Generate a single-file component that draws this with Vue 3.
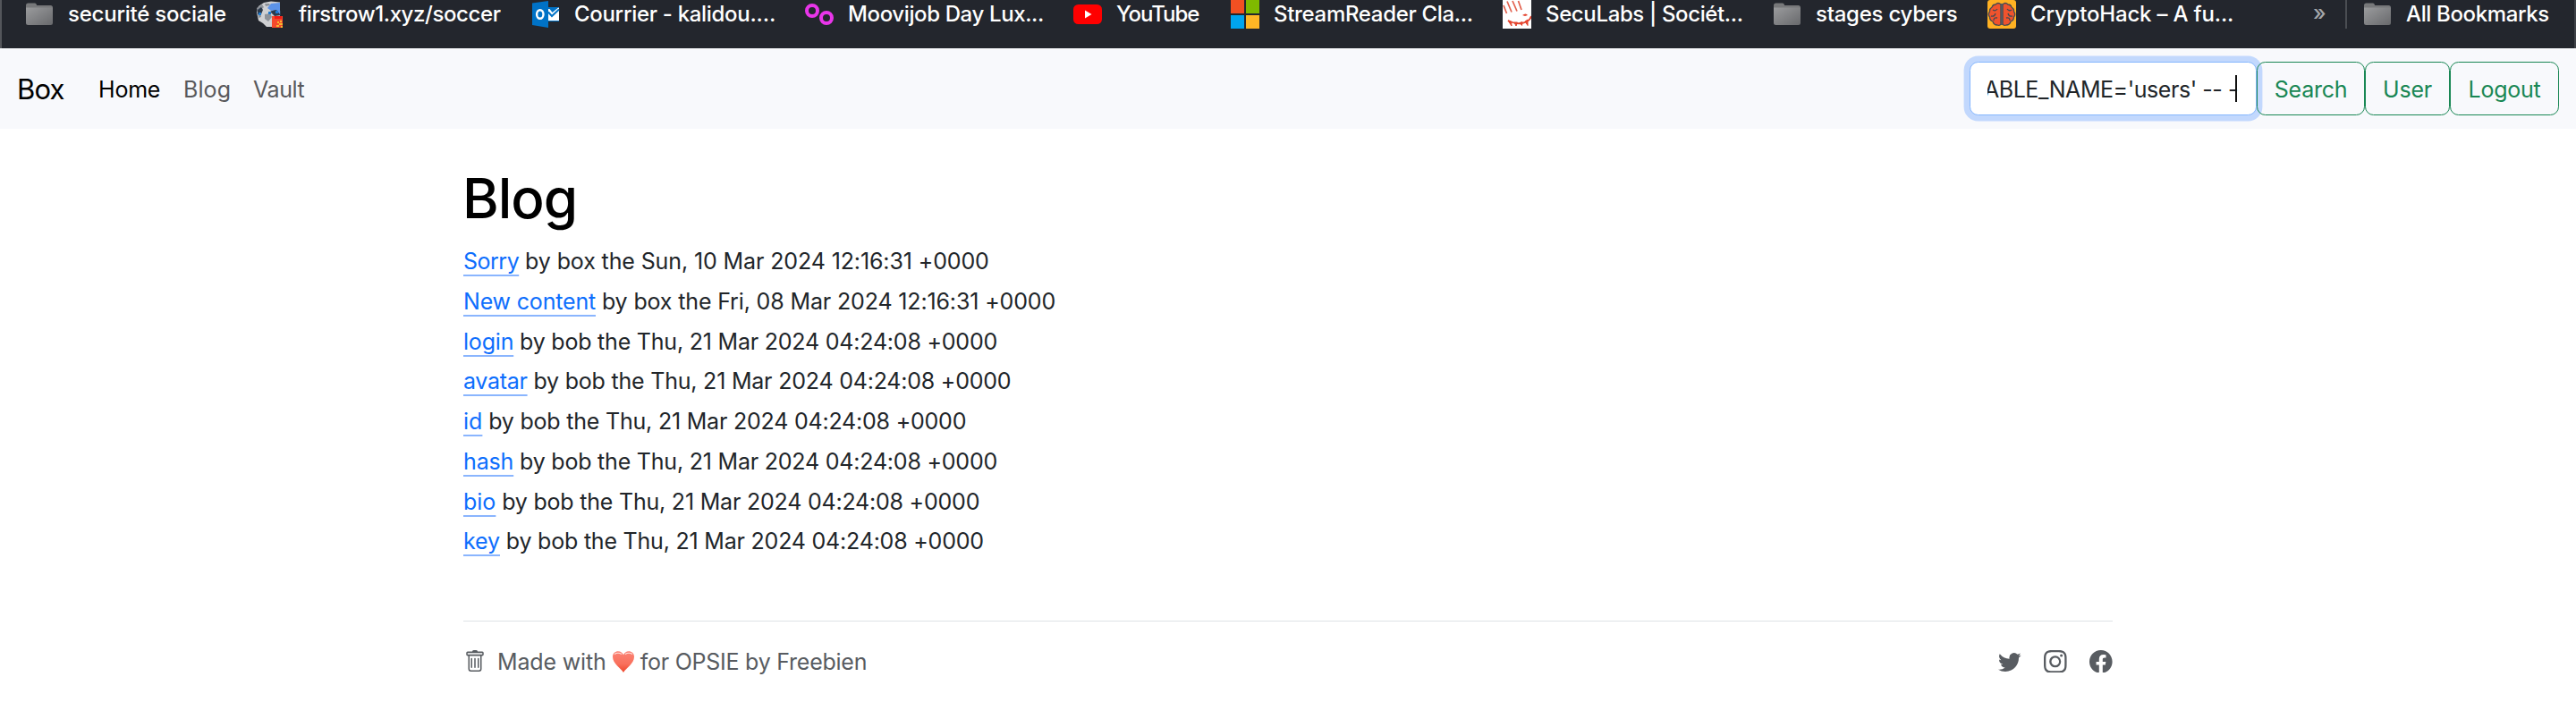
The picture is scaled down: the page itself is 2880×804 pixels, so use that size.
<script setup>
const bookmarks = [
  { icon: 'folder', label: 'securité sociale', width: 258, spacing: -0.225 },
  { icon: 'ball', label: 'firstrow1.xyz/soccer', width: 308, spacing: -0.402 },
  { icon: 'outlook', label: 'Courrier - kalidou.…', width: 306, spacing: -0.306 },
  { icon: 'moovi', label: 'Moovijob Day Lux...', width: 300, spacing: -0.376 },
  { icon: 'youtube', label: 'YouTube', width: 176, spacing: -1.05 },
  { icon: 'microsoft', label: 'StreamReader Cla...', width: 304, spacing: -0.311 },
  { icon: 'secu', label: 'SecuLabs | Sociét...', width: 302, spacing: -0.367 },
  { icon: 'folder', label: 'stages cybers', width: 240, spacing: -0.245 },
  { icon: 'brain', label: 'CryptoHack – A fu...', width: 300, spacing: -0.179 },
]

const thu = 'bob the Thu, 21 Mar 2024 04:24:08 +0000'
const posts = [
  { title: 'Sorry', meta: 'box the Sun, 10 Mar 2024 12:16:31 +0000', ls: -0.5, ms: -0.117 },
  { title: 'New content', meta: 'box the Fri, 08 Mar 2024 12:16:31 +0000', ls: -0.177, ms: -0.143 },
  { title: 'login', meta: thu, ls: -0.2, ms: -0.21 },
  { title: 'avatar', meta: thu, ls: -0.3, ms: -0.21 },
  { title: 'id', meta: thu, ls: 0, ms: -0.21 },
  { title: 'hash', meta: thu, ls: -0.15, ms: -0.21 },
  { title: 'bio', meta: thu, ls: 0, ms: -0.21 },
  { title: 'key', meta: thu, ls: -0.1, ms: -0.21 },
]
</script>

<template>
  <div class="page">
    <svg width="0" height="0" class="defs">
      <defs>
        <linearGradient id="folderFill" x1="0" y1="0" x2="1" y2="1">
          <stop offset="0" stop-color="#9a9b9d" />
          <stop offset="1" stop-color="#68696c" />
        </linearGradient>
        <linearGradient id="heartFill" x1="0" y1="0" x2="0" y2="1">
          <stop offset="0" stop-color="#fb8375" />
          <stop offset="0.6" stop-color="#f9705c" />
          <stop offset="1" stop-color="#ee4428" />
        </linearGradient>
        <symbol id="folder" viewBox="0 0 32 32">
          <path d="M1 6a2.500 2.500 0 0 1 2.500-2.500h7.500a2 2 0 0 1 1.800 1.500l.4 1H28.500A2.500 2.500 0 0 1 31 8.500V10H1z" fill="#77787a" />
          <path d="M1 8.500h29a1 1 0 0 1 1 1V25.500A2.500 2.500 0 0 1 28.500 28h-25A2.500 2.500 0 0 1 1 25.500z" fill="url(#folderFill)" />
        </symbol>
        <symbol id="ball" viewBox="0 0 32 32">
          <path d="M9 3l8-1.500 10 1v21L18 30h-6l-4-4-5-3-2-9 2-7z" fill="#cfd0d2" />
          <path d="M1 9l6-4 2 3-4 4 1 7-3 1zM10 4l5 0 1 2-5 1zM10 16l6-1 2 4-4 5-4-3z" fill="#8d9299" />
          <path d="M2 11l4-3 2 3-2 5-4 0zM16 13l6-3 6 2v5l-7 1z" fill="#2d3b4c" />
          <path d="M17 4l10-1v13l-4-5-6 1-4-3z" fill="#5c93e8" />
          <path d="M3 14h3v3H3zM14 13h3v3h-3zM22 12h3v3h-3z" fill="#1d7ad0" />
          <rect x="18" y="18" width="12" height="13" fill="#f4492d" />
          <path d="M21 18h8v3h-8z" fill="#f11a14" />
          <path d="M24 24h2v2h-2zM27 23h2v2h-2zM26 26h4v2h-4zM23 28h3v2h-3zM28 29h2v2h-2z" fill="#f8b62d" />
        </symbol>
        <symbol id="outlook" viewBox="0 0 32 32">
          <path d="M1 3.500L19 1v30L1 28z" fill="#0072c6" />
          <path d="M19 8h12v16H19z" fill="#0072c6" />
          <path d="M19 10h1.500l3 4L30 8.800h1V23H19z" fill="#fff" />
          <path d="M19 13.500l4 4.500 8-7.500" fill="none" stroke="#0072c6" stroke-width="2" />
          <ellipse cx="9.800" cy="16" rx="3.700" ry="4.800" fill="none" stroke="#fff" stroke-width="2.400" />
        </symbol>
        <symbol id="moovi" viewBox="0 0 32 32">
          <circle cx="8" cy="12" r="6" fill="none" stroke="#e935ea" stroke-width="4" />
          <circle cx="24" cy="20" r="6" fill="none" stroke="#e935ea" stroke-width="4" />
        </symbol>
        <symbol id="youtube" viewBox="0 0 32 32">
          <rect x="0" y="5" width="32" height="22" rx="5.500" fill="#f00" />
          <path d="M13 11.500L20.500 16 13 20.500z" fill="#fff" />
        </symbol>
        <symbol id="microsoft" viewBox="0 0 32 32">
          <path d="M0 0h15v15H0z" fill="#f25022" />
          <path d="M17 0h15v15H17z" fill="#7fba00" />
          <path d="M0 17h15v15H0z" fill="#00a4ef" />
          <path d="M17 17h15v15H17z" fill="#ffb625" />
        </symbol>
        <symbol id="secu" viewBox="0 0 32 32">
          <path d="M0 0h32v32H0z" fill="#fff" />
          <path d="M1 6l3.500 9M5 1.500l5 12M11 1l5 11.500M17.500 1l3.500 10" fill="none" stroke="#e2604d" stroke-width="1.700" />
          <path d="M6 23q13 6 21 1 4-2 5-6" fill="none" stroke="#e5452f" stroke-width="1.800" />
          <path d="M6 23l4 6-.5-5zM13 25l2 4 1.500-4zM19 25.500l2.500 3 .5-4zM25 24l3 4.500V22z" fill="#e5452f" stroke="#e5452f" stroke-width="1" />
          <path d="M22 17q4-3 6 0l-3 1z" fill="#e5452f" />
        </symbol>
        <symbol id="brain" viewBox="0 0 32 32">
          <rect width="32" height="32" rx="3" fill="#ffb122" />
          <g fill="#f0532d" stroke="#454a51" stroke-width="1.300" stroke-linejoin="round">
            <path d="M15 5q-3-3-6 0-3 0-4 3-3 2-2.500 5Q0 16 2.500 19q0 4 3.500 5 1 4 5 4 3 1 4-1z" />
            <path d="M17 5q3-3 6 0 3 0 4 3 3 2 2.500 5Q32 16 29.500 19q0 4-3.500 5-1 4-5 4-3 1-4-1z" />
            <path d="M6 11q3 2 5-1M4 18q4 1 5-3M7 23q0-4 4-3M27 11q-3 2-5-1M28 18q-4 1-5-3M25 23q0-4-4-3" fill="none" />
          </g>
          <path d="M14.800 4h2.400v24h-2.400z" fill="#55585d" />
        </symbol>
      </defs>
    </svg>

    <div class="bookmarks">
      <div
        v-for="b in bookmarks"
        :key="b.label"
        class="bookmark"
        :style="{ width: b.width + 'px', letterSpacing: b.spacing + 'px' }"
      >
        <svg width="32" height="32"><use :href="'#' + b.icon" /></svg>
        <span>{{ b.label }}</span>
      </div>
      <span class="more">»</span>
      <span class="divider"></span>
      <div class="bookmark all">
        <svg width="32" height="32"><use href="#folder" /></svg>
        <span>All Bookmarks</span>
      </div>
    </div>

    <nav class="navbar">
      <a class="brand">Box</a>
      <a class="link home">Home</a>
      <a class="link blog">Blog</a>
      <a class="link vault">Vault</a>
      <div class="tools">
        <div class="field">
          <div class="value"><span>TABLE_NAME='users' -- -</span></div>
          <i class="caret"></i>
        </div>
        <button class="btn search">Search</button>
        <button class="btn user">User</button>
        <button class="btn logout">Logout</button>
      </div>
    </nav>

    <main class="container">
      <h1>Blog</h1>
      <ul>
        <li v-for="p in posts" :key="p.title" :style="{ letterSpacing: p.ms + 'px' }">
          <a :style="{ letterSpacing: p.ls + 'px' }">{{ p.title }}</a> by {{ p.meta }}
        </li>
      </ul>
      <footer>
        <svg class="trash" width="24" height="25.600" viewBox="0 0 16 16" preserveAspectRatio="none" fill="currentColor">
          <path d="M5.500 5.500A.5.500 0 0 1 6 6v6a.5.500 0 0 1-1 0V6a.5.500 0 0 1 .5-.5m2.500 0a.5.500 0 0 1 .5.500v6a.5.500 0 0 1-1 0V6a.5.500 0 0 1 .5-.5m3 .5a.5.500 0 0 0-1 0v6a.5.500 0 0 0 1 0z" />
          <path d="M14.500 3a1 1 0 0 1-1 1H13v9a2 2 0 0 1-2 2H5a2 2 0 0 1-2-2V4h-.5a1 1 0 0 1-1-1V2a1 1 0 0 1 1-1H6a1 1 0 0 1 1-1h2a1 1 0 0 1 1 1h3.500a1 1 0 0 1 1 1zM4.118 4 4 4.059V13a1 1 0 0 0 1 1h6a1 1 0 0 0 1-1V4.059L11.882 4zM2.500 3h11V2h-11z" />
        </svg>
        <span class="made">Made with</span>
        <svg class="heart" width="24" height="24" viewBox="0 0 24 24">
          <path d="M12 24C9 19 0 14 0 6.500 0 2.500 3 .3 6 .3c3 0 5 1.700 6 4 1-2.300 3-4 6-4s6 2.200 6 6.200C24 14 15 19 12 24z" fill="url(#heartFill)" />
          <path d="M2 3.500q4-2.500 8 0M14 3.500q4-2.500 8 0" fill="none" stroke="#fde0dc" stroke-width="1.200" />
        </svg>
        <span class="for">for OPSIE by Freebien</span>
        <div class="social">
          <svg viewBox="0 0 16 16" fill="currentColor">
            <path d="M5.026 15c6.038 0 9.341-5.003 9.341-9.334q.002-.211-.006-.422A6.700 6.700 0 0 0 16 3.542a6.700 6.700 0 0 1-1.889.518 3.300 3.300 0 0 0 1.447-1.817 6.500 6.500 0 0 1-2.087.793A3.286 3.286 0 0 0 7.875 6.030a9.320 9.320 0 0 1-6.767-3.429 3.290 3.290 0 0 0 1.018 4.382A3.300 3.300 0 0 1 .64 6.575v.045a3.290 3.290 0 0 0 2.632 3.218 3.200 3.200 0 0 1-.865.115 3 3 0 0 1-.614-.057 3.280 3.280 0 0 0 3.067 2.277A6.600 6.600 0 0 1 .78 13.580a6 6 0 0 1-.78-.045A9.340 9.340 0 0 0 5.026 15" />
          </svg>
          <svg viewBox="0 0 16 16" fill="currentColor">
            <path d="M8 0C5.829 0 5.556.010 4.703.048 3.850.088 3.269.222 2.760.420a3.900 3.900 0 0 0-1.417.923A3.900 3.900 0 0 0 .420 2.760C.222 3.268.087 3.850.048 4.700.010 5.555 0 5.827 0 8.001c0 2.172.010 2.444.048 3.297.040.852.174 1.433.372 1.942.205.526.478.972.923 1.417.444.445.890.719 1.416.923.510.198 1.090.333 1.942.372C5.555 15.990 5.827 16 8 16s2.444-.010 3.298-.048c.851-.040 1.434-.174 1.943-.372a3.900 3.900 0 0 0 1.416-.923c.445-.445.718-.891.923-1.417.197-.509.332-1.090.372-1.942C15.990 10.445 16 10.173 16 8s-.010-2.445-.048-3.299c-.040-.851-.175-1.433-.372-1.941a3.900 3.900 0 0 0-.923-1.417A3.900 3.900 0 0 0 13.240.420c-.510-.198-1.092-.333-1.943-.372C10.443.010 10.172 0 7.998 0zm-.717 1.442h.718c2.136 0 2.389.007 3.232.046.780.035 1.204.166 1.486.275.373.145.640.319.920.599s.453.546.598.920c.110.281.240.705.275 1.485.039.843.047 1.096.047 3.231s-.008 2.389-.047 3.232c-.035.780-.166 1.203-.275 1.485a2.500 2.500 0 0 1-.599.919c-.280.280-.546.453-.920.598-.280.110-.704.240-1.485.276-.843.038-1.096.047-3.232.047s-2.390-.009-3.233-.047c-.780-.036-1.203-.166-1.485-.276a2.500 2.500 0 0 1-.920-.598 2.500 2.500 0 0 1-.600-.920c-.109-.281-.240-.705-.275-1.485-.038-.843-.046-1.096-.046-3.233s.008-2.388.046-3.231c.036-.780.166-1.204.276-1.486.145-.373.319-.640.599-.920s.546-.453.920-.598c.282-.110.705-.240 1.485-.276.738-.034 1.024-.044 2.515-.045zm4.988 1.328a.960.960 0 1 0 0 1.920.960.960 0 0 0 0-1.920m-4.270 1.122a4.109 4.109 0 1 0 0 8.217 4.109 4.109 0 0 0 0-8.217m0 1.441a2.667 2.667 0 1 1 0 5.334 2.667 2.667 0 0 1 0-5.334" />
          </svg>
          <svg viewBox="0 0 16 16" fill="currentColor">
            <path d="M16 8.049c0-4.446-3.582-8.050-8-8.050C3.580 0-.002 3.603-.002 8.050c0 4.017 2.926 7.347 6.750 7.951v-5.625h-2.030V8.050H6.750V6.275c0-2.017 1.195-3.131 3.022-3.131.876 0 1.791.157 1.791.157v1.980h-1.009c-.993 0-1.303.621-1.303 1.258v1.510h2.218l-.354 2.326H9.250V16c3.824-.604 6.750-3.934 6.750-7.951" />
          </svg>
        </div>
      </footer>
    </main>
  </div>
</template>

<style>
body {
  background: #fff;
}
</style>

<style scoped>
.page {
  width: 2880px;
  height: 804px;
  overflow: hidden;
  background: #fff;
  color: #212529;
  font: 400 25px/38.4px Inter, "Liberation Sans", sans-serif;
}
.defs {
  display: block;
}
.bookmarks {
  display: flex;
  align-items: flex-start;
  box-sizing: border-box;
  height: 54px;
  padding-left: 26px;
  background: #23262d;
  border-left: 2px solid #54565b;
  border-right: 2px solid #3f4248;
  color: #fff;
  font-size: 24px;
  line-height: 31px;
  font-weight: 500;
}
.bookmark {
  display: flex;
  flex: none;
  gap: 16px;
  white-space: nowrap;
}
.more {
  width: 98px;
  padding-left: 64px;
  box-sizing: border-box;
  color: #a4a6aa;
  font-size: 24px;
  line-height: 29px;
}
.divider {
  width: 2px;
  height: 32px;
  margin: 0 18px 0 2px;
  background: #4a4d52;
}
.all {
  letter-spacing: -0.367px;
}
.navbar {
  display: flex;
  align-items: center;
  height: 90px;
  box-sizing: border-box;
  padding: 0 19px;
  background: #f8f9fc;
}
.brand {
  width: 91px;
  padding-top: 2px;
  color: #000;
  font-size: 31px;
  letter-spacing: -0.8px;
}
.link {
  color: #59595c;
  padding-top: 2px;
}
.home {
  width: 95px;
  color: #000;
  letter-spacing: -0.2px;
}
.blog {
  width: 78px;
  letter-spacing: 0.1px;
}
.vault {
  letter-spacing: -0.4px;
}
.tools {
  display: flex;
  margin-left: auto;
}
.field {
  display: flex;
  align-items: center;
  box-sizing: border-box;
  width: 321px;
  height: 60px;
  padding: 0 21px 0 19px;
  background: #fff;
  border: 1px solid #86b7fe;
  border-radius: 9.6px;
  box-shadow: 0 0 0 6.4px #c2d8fd;
}
.value {
  display: flex;
  flex: 1;
  min-width: 0;
  justify-content: flex-end;
  overflow: hidden;
  padding-top: 2px;
  margin-right: -3px;
  white-space: nowrap;
  letter-spacing: -0.45px;
}
.caret {
  width: 2px;
  height: 30px;
  background: #111;
}
.btn {
  height: 60px;
  box-sizing: border-box;
  padding: 2px 0 0;
  position: relative;
  background: #f8f9fc;
  border: 1px solid #198754;
  border-radius: 9.6px;
  color: #198754;
  font: inherit;
  letter-spacing: -0.25px;
}
.search {
  width: 121px;
  background: transparent;
}
.user {
  width: 95px;
}
.logout {
  width: 122px;
}
.container {
  width: 1844px;
  margin: 0 auto;
  padding-top: 39px;
}
h1 {
  margin: 0 0 10px;
  color: #000;
  font-size: 62px;
  font-weight: 500;
  line-height: 77px;
  letter-spacing: -1px;
  text-indent: -1px;
}
ul {
  margin: 0;
  padding: 0;
  list-style: none;
}
li {
  height: 44.75px;
  line-height: 44.75px;
}
li a {
  color: #0d6efd;
  text-decoration: underline 2px #8ab5fe;
  text-underline-offset: 6px;
  text-decoration-skip-ink: none;
}
footer {
  display: flex;
  align-items: center;
  height: 89px;
  margin-top: 66px;
  border-top: 1px solid #dee2e6;
  color: #585c61;
}
.trash {
  margin-left: 1px;
}
.made {
  margin-left: 13px;
  padding-top: 1px;
  letter-spacing: -0.15px;
}
.heart {
  margin-left: 7px;
}
.for {
  margin-left: 7px;
  padding-top: 1px;
  letter-spacing: -0.243px;
}
.social {
  display: flex;
  gap: 25.6px;
  margin-left: auto;
}
.social svg {
  width: 25.6px;
  height: 25.6px;
}
</style>
